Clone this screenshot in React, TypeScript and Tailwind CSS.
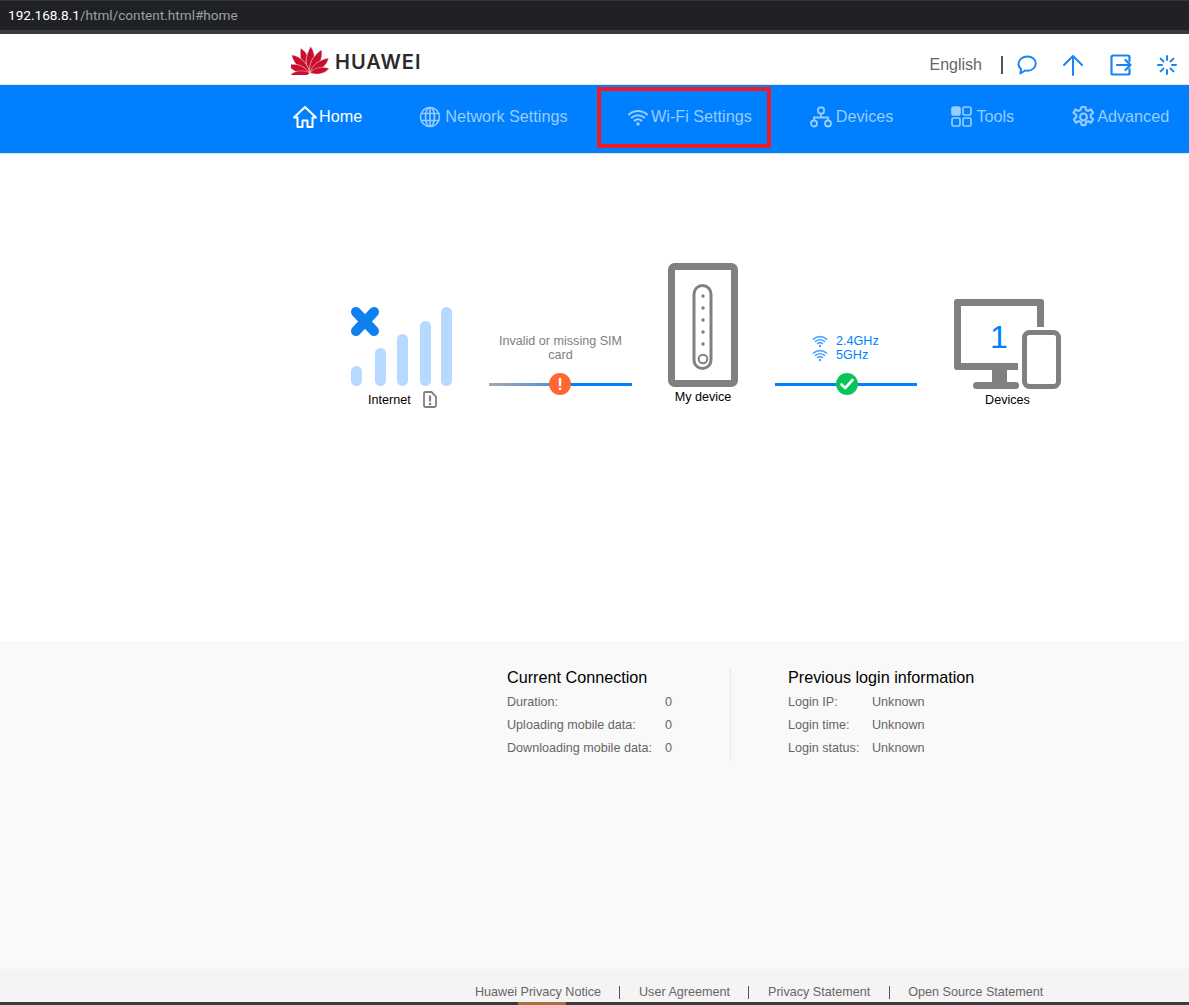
import React from "react";

const navClass = "flex items-center text-[16.2px] leading-none text-[#99ccff]";

function Petals() {
  const petals: [number, number][] = [
    [-11, 1.02], [11, 1.02], [-36, 1], [36, 1], [-61, 0.92], [61, 0.92], [-86, 0.76], [86, 0.76],
  ];
  return (
    <svg width="38" height="29" viewBox="-19 -27 38 29" fill="#c8102e" stroke="#fff" strokeWidth="0.5">
      {petals.map(([r, s], i) => (
        <path
          key={i}
          transform={`rotate(${r}) scale(${s})`}
          d="M0 0 C-6.500 -6 -8 -15 -4.500 -25.500 C-1 -23.500 5.500 -13 0 0Z"
        />
      ))}
    </svg>
  );
}

function HomeIcon() {
  return (
    <svg width="26" height="24" viewBox="0 0 26 24" fill="none" stroke="#fff" strokeWidth="2" strokeLinejoin="round" strokeLinecap="round">
      <path d="M2 12.500 13 2l11 10.500h-3.500V22h-5v-6.500h-5V22h-5v-9.500z" />
    </svg>
  );
}
function GlobeIcon() {
  return (
    <svg width="22" height="22" viewBox="0 0 22 22" fill="none" stroke="#99ccff" strokeWidth="1.600">
      <circle cx="11" cy="11" r="9.500" />
      <ellipse cx="11" cy="11" rx="4.500" ry="9.500" />
      <path d="M11 1.500v19M2.200 7.500h17.600M2.200 14.500h17.600" />
    </svg>
  );
}
function WifiIcon({ size = 22, color = "#99ccff", w = 2 }: { size?: number; color?: string; w?: number }) {
  return (
    <svg width={size} height={size} viewBox="0 0 22 22" fill="none" stroke={color} strokeWidth={w} strokeLinecap="round">
      <path d="M2 8.500c5-4.600 13-4.600 18 0M4.800 11.600c3.500-3.100 8.900-3.100 12.400 0M7.600 14.600c2-1.600 4.800-1.600 6.800 0" />
      <circle cx="11" cy="18" r="1.700" fill={color} stroke="none" />
    </svg>
  );
}
function TreeIcon() {
  return (
    <svg width="22" height="22" viewBox="0 0 22 22" fill="none" stroke="#99ccff" strokeWidth="1.800">
      <rect x="8" y="1.500" width="6" height="6" rx="2" />
      <circle cx="4" cy="17.500" r="3" />
      <circle cx="18" cy="17.500" r="3" />
      <path d="M11 7.500v4M4 14.500v-3h14v3" />
    </svg>
  );
}
function ToolsIcon() {
  return (
    <svg width="21" height="21" viewBox="0 0 21 21" fill="none" stroke="#99ccff" strokeWidth="1.700">
      <rect x="1" y="1" width="8" height="8" rx="2" fill="#99ccff" />
      <rect x="12" y="1" width="8" height="8" rx="1.500" />
      <rect x="1" y="12" width="8" height="8" rx="1.500" />
      <rect x="12" y="12" width="8" height="8" rx="1.500" />
    </svg>
  );
}
function GearIcon() {
  return (
    <svg width="23" height="24" viewBox="0 0 24 24" fill="none" stroke="#99ccff" strokeWidth="2.200" strokeLinejoin="round">
      <path d="M10 1.500h4l.7 3.200 2.300 1 2.800-1.700 2.200 3.500-2.400 2.200v2.600l2.400 2.200-2.200 3.500-2.800-1.700-2.300 1-.7 3.200h-4l-.7-3.200-2.300-1-2.800 1.700-2.200-3.500 2.400-2.200V9.700L1.500 7.500l2.200-3.500 2.800 1.700 2.300-1z" />
      <circle cx="12" cy="12" r="3.600" />
    </svg>
  );
}

function ChatIcon() {
  return (
    <svg width="20" height="20" viewBox="0 0 20 20" fill="none" stroke="#1a84f5" strokeWidth="1.900" strokeLinejoin="round">
      <path d="M10.500 1.500c4.600 0 8.300 3 8.300 7s-3.700 7.200-8.300 7.200c-.8 0-1.500-.1-2.200-.3L3.300 18.500l.8-4.400C2.300 12.800 1.500 10.800 1.500 8.700c0-4 4.300-7.200 9-7.200z" />
    </svg>
  );
}
function ArrowIcon() {
  return (
    <svg width="22" height="22" viewBox="0 0 22 22" fill="none" stroke="#1a84f5" strokeWidth="2" strokeLinecap="round" strokeLinejoin="round">
      <path d="M11 2v19M2 11l9-9 9 9" />
    </svg>
  );
}
function ExitIcon() {
  return (
    <svg width="22" height="22" viewBox="0 0 22 22" fill="none" stroke="#1a84f5" strokeWidth="2.200" strokeLinecap="round" strokeLinejoin="round">
      <path d="M19.500 7V3a1.500 1.500 0 0 0-1.500-1.500H3A1.500 1.500 0 0 0 1.500 3v16A1.500 1.500 0 0 0 3 20.500h15a1.500 1.500 0 0 0 1.500-1.500v-4" />
      <path d="M7 11h13.500M15.500 6l5 5-5 5" />
    </svg>
  );
}
function SpinnerIcon() {
  return (
    <svg width="20" height="20" viewBox="0 0 20 20" fill="none" stroke="#1a84f5" strokeWidth="2" strokeLinecap="round">
      <path d="M10 1v4M10 15v4M1 10h4M15 10h4M3.600 3.600l2.900 2.900M13.500 13.500l2.900 2.900M16.400 3.600l-2.900 2.900M6.500 13.500l-2.900 2.900" />
    </svg>
  );
}

function Signal() {
  return (
    <svg width="101" height="80" viewBox="0 0 101 80" fill="#b6d9ff">
      <rect x="0" y="59" width="11" height="20" rx="5.500" />
      <rect x="24" y="41" width="11" height="38" rx="5.500" />
      <rect x="46" y="27" width="11" height="52" rx="5.500" />
      <rect x="69" y="14" width="11" height="65" rx="5.500" />
      <rect x="90" y="0" width="11" height="79" rx="5.500" />
      <path d="M5 5l18 19M23 5 5 24" stroke="#0f80f0" strokeWidth="10" strokeLinecap="round" />
    </svg>
  );
}
function SimIcon() {
  return (
    <svg width="14" height="17" viewBox="0 0 14 17" fill="none" stroke="#808080" strokeWidth="1.800">
      <path d="M2.500 1h6L13 5.500V14.500a1.500 1.500 0 0 1-1.500 1.500h-9A1.500 1.500 0 0 1 1 14.500v-12A1.500 1.500 0 0 1 2.500 1z" />
      <path d="M7 4.500v6" strokeWidth="2.200" />
      <circle cx="7" cy="13" r="1.300" fill="#808080" stroke="none" />
    </svg>
  );
}
function Device() {
  return (
    <svg width="70" height="124" viewBox="0 0 70 124" fill="none" stroke="#808080">
      <rect x="3.500" y="3.500" width="63" height="117" rx="3" strokeWidth="7" />
      <rect x="26" y="22.500" width="17" height="83" rx="8.500" strokeWidth="3" />
      {[33, 45, 57, 69, 81].map((y) => (
        <circle key={y} cx="35" cy={y} r="1.700" fill="#808080" stroke="none" />
      ))}
      <circle cx="35" cy="96" r="4.300" strokeWidth="2" />
    </svg>
  );
}
function DevicesIcon() {
  return (
    <svg width="107" height="90" viewBox="0 0 107 90" fill="#808080">
      <path d="M3 0h84a3 3 0 0 1 3 3v25h-7V7H7v57h57v7H3a3 3 0 0 1-3-3V3a3 3 0 0 1 3-3z" />
      <rect x="38" y="71" width="15" height="12" />
      <rect x="19" y="83" width="46" height="7" rx="3.500" />
      <rect x="70.500" y="33.500" width="34" height="54" rx="5" fill="#fff" stroke="#808080" strokeWidth="5" />
    </svg>
  );
}

function Link({ icon, left, pos }: { icon: React.ReactNode; left: string; pos: string }) {
  return (
    <div className="relative mt-[11px] flex h-[22px] items-center">
      <div className={`h-[3px] w-[72px] ${left}`} />
      <div className="h-[3px] w-[71px] bg-[#0080ff]" />
      <div className={`absolute top-0 ${pos}`}>{icon}</div>
    </div>
  );
}

function ConnRow({ label, value, w }: { label: string; value: string; w: string }) {
  return (
    <div className="flex h-[23px] items-center text-[12.6px] text-[#666666]">
      <span className={w}>{label}</span>
      <span>{value}</span>
    </div>
  );
}

function FootSep() {
  return <span className="mx-[18.5px] h-[13px] w-px bg-[#555555]" />;
}

export default function App() {
  return (
    <div className="flex h-[1005px] flex-col overflow-hidden bg-white font-['Liberation_Sans',Arial,sans-serif]">
      {/* browser address bar */}
      <div className="flex h-[34px] shrink-0 items-center border-t border-b-[4px] border-t-[#35363a] border-b-[#3a3b3e] bg-[#202124] pl-[8px] font-['Roboto',sans-serif] text-[13.6px]">
        <span className="text-white">192.168.8.1</span>
        <span className="text-[#9aa0a6]">/html/content.html#home</span>
      </div>

      {/* header */}
      <header className="flex h-[51px] shrink-0 items-center border-b border-[#e5e5e5] pl-[291px]">
        <div className="flex items-center gap-[6px] pt-[3px]">
          <Petals />
          <span className="mt-[3px] font-['Inter',sans-serif] text-[20px] font-semibold leading-none tracking-[1px] text-[#2b2b2b]">HUAWEI</span>
        </div>
        <div className="ml-[508px] flex items-center pt-[12px]">
          <span className="text-[16px] text-[#666666]">English</span>
          <span className="ml-[19px] h-[18px] w-[2px] bg-[#555555]" />
          <div className="ml-[14px]"><ChatIcon /></div>
          <div className="ml-[25px]"><ArrowIcon /></div>
          <div className="ml-[26px]"><ExitIcon /></div>
          <div className="ml-[25px]"><SpinnerIcon /></div>
        </div>
      </header>

      {/* navigation */}
      <nav className="relative flex h-[69px] shrink-0 items-center gap-[58px] border-b border-[#e5e5e5] bg-[#0080ff] pl-[292px] pb-[5px]">
        <div className="flex items-center gap-[1px] text-[16.2px] leading-none text-white"><HomeIcon />Home</div>
        <div className={`${navClass} -ml-[1px]`}><GlobeIcon /><span className="ml-[4px]">Network Settings</span></div>
        <div className={`${navClass} ml-[1.5px]`}><WifiIcon /><span className="ml-[2px]">Wi-Fi Settings</span></div>
        <div className={navClass}><TreeIcon /><span className="ml-[4px]">Devices</span></div>
        <div className={navClass}><ToolsIcon /><span className="ml-[4px]">Tools</span></div>
        <div className={navClass}><GearIcon /><span className="ml-[2px]">Advanced</span></div>
        <div className="absolute left-[597px] top-[2px] h-[61px] w-[174px] border-[4px] border-[#ed1c24]" />
      </nav>

      {/* status diagram */}
      <main className="flex flex-1 items-start pl-[351px] pt-[109px] text-[12.6px] text-black">
        <div className="mt-[44px] w-[101px]">
          <Signal />
          <div className="mt-[4px] flex items-center">
            <span className="ml-[17px] leading-[14px]">Internet</span>
            <span className="ml-[12px]"><SimIcon /></span>
          </div>
        </div>

        <div className="ml-[37px] mt-[71px] w-[143px]">
          <div className="h-[28px] px-[6px] text-center leading-[14px] text-[#808080]">Invalid or missing SIM card</div>
          <Link
            left="bg-gradient-to-r from-[#a6a6a6] to-[#3d8de0]"
            pos="left-[60px]"
            icon={
              <div className="flex h-[22px] w-[22px] items-center justify-center rounded-full bg-[#ff6633] text-[17px] font-bold leading-none text-white">!</div>
            }
          />
        </div>

        <div className="ml-[36px] w-[70px]">
          <Device />
          <div className="mt-[3px] text-center leading-[14px]">My device</div>
        </div>

        <div className="ml-[37px] mt-[71px] w-[142px]">
          <div className="h-[28px] pl-[37px] leading-[14px] text-[#0080ff]">
            <div className="flex h-[14px] items-center gap-[8px]"><WifiIcon size={16} color="#4da6ff" w={2.200} /><span>2.4GHz</span></div>
            <div className="flex h-[14px] items-center gap-[8px]"><WifiIcon size={16} color="#4da6ff" w={2.200} /><span>5GHz</span></div>
          </div>
          <Link
            left="bg-[#0080ff]"
            pos="left-[61px]"
            icon={
              <div className="flex h-[22px] w-[22px] items-center justify-center rounded-full bg-[#0ac45a]">
                <svg width="14" height="12" viewBox="0 0 14 12" fill="none" stroke="#fff" strokeWidth="2.600" strokeLinecap="round" strokeLinejoin="round">
                  <path d="M1.500 6.500 5.200 10 12.500 2" />
                </svg>
              </div>
            }
          />
        </div>

        <div className="relative ml-[37px] mt-[36px] w-[107px]">
          <DevicesIcon />
          <span className="absolute left-[36px] top-[20px] text-[32px] leading-[36px] text-[#0080ff]">1</span>
          <div className="mt-[4px] text-center leading-[14px]">Devices</div>
        </div>
      </main>

      {/* connection info */}
      <section className="flex h-[328px] shrink-0 items-start bg-[#f9f9f9] pl-[507px] pt-[27px]">
        <div className="h-[93px] w-[224px] border-r border-[#e8e8e8]">
          <div className="h-[22.5px] text-[16.2px] leading-[19px] text-black">Current Connection</div>
          <ConnRow label="Duration:" value="0" w="w-[158px]" />
          <ConnRow label="Uploading mobile data:" value="0" w="w-[158px]" />
          <ConnRow label="Downloading mobile data:" value="0" w="w-[158px]" />
        </div>
        <div className="pl-[57px]">
          <div className="h-[22.5px] text-[16.2px] leading-[19px] text-black">Previous login information</div>
          <ConnRow label="Login IP:" value="Unknown" w="w-[84px]" />
          <ConnRow label="Login time:" value="Unknown" w="w-[84px]" />
          <ConnRow label="Login status:" value="Unknown" w="w-[84px]" />
        </div>
      </section>

      {/* footer */}
      <footer className="flex h-[33px] shrink-0 items-center bg-[#f4f4f4] pl-[475px] pt-[13px] text-[12.6px] text-[#666666]">
        <span>Huawei Privacy Notice</span>
        <FootSep />
        <span>User Agreement</span>
        <FootSep />
        <span>Privacy Statement</span>
        <FootSep />
        <span>Open Source Statement</span>
      </footer>
      <div className="flex h-[3px] shrink-0 bg-[#3c3c3c] pl-[518px]">
        <div className="h-full w-[48px] bg-[#a8703c]" />
      </div>
    </div>
  );
}
